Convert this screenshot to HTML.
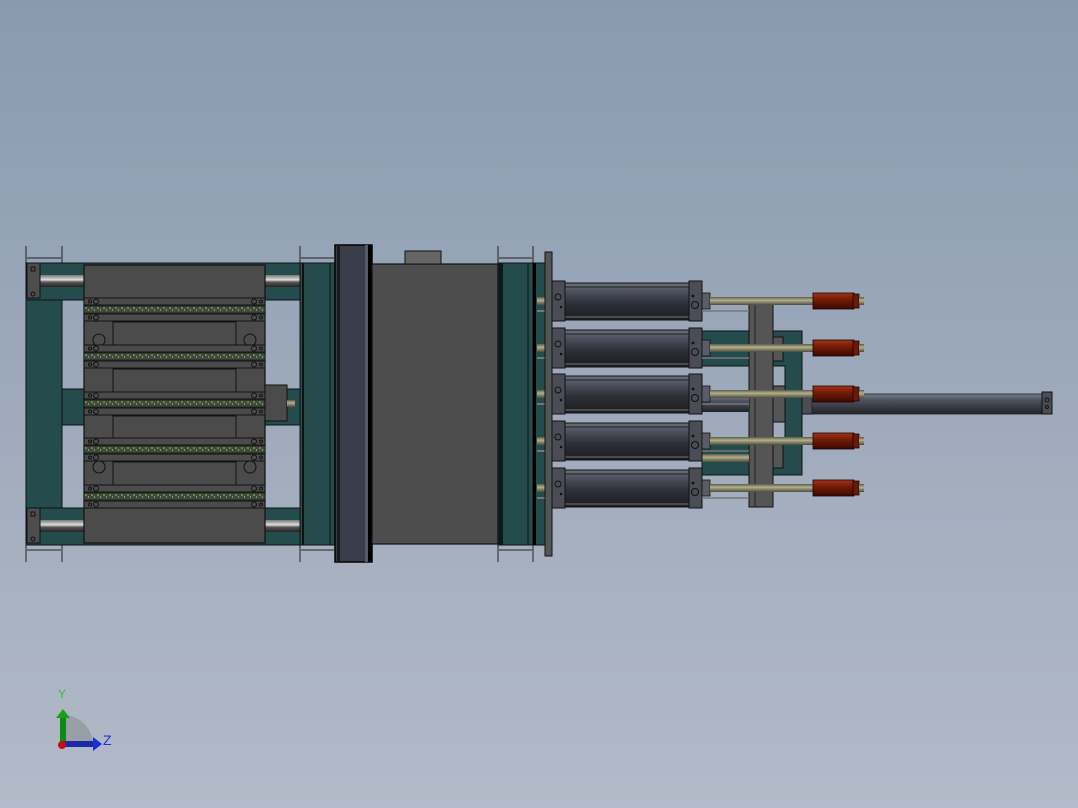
<!DOCTYPE html>
<html><head><meta charset="utf-8"><style>
html,body{margin:0;padding:0;width:1078px;height:808px;overflow:hidden}
body{background:linear-gradient(#899aaf,#b3bac9)}
svg{position:absolute;left:0;top:0}
</style></head><body>
<svg width="1078" height="808" viewBox="0 0 1078 808" xmlns="http://www.w3.org/2000/svg">
<defs>
<linearGradient id="rod" x1="0" y1="0" x2="0" y2="1"><stop offset="0" stop-color="#777"/><stop offset=".4" stop-color="#ddd"/><stop offset=".6" stop-color="#555"/><stop offset="1" stop-color="#222"/></linearGradient>
<linearGradient id="barrel" x1="0" y1="0" x2="0" y2="1"><stop offset="0" stop-color="#6a6e7c"/><stop offset=".25" stop-color="#4a4e5a"/><stop offset=".55" stop-color="#2e3038"/><stop offset="1" stop-color="#1c1d22"/></linearGradient>
<linearGradient id="olive" x1="0" y1="0" x2="0" y2="1"><stop offset="0" stop-color="#5b5a45"/><stop offset=".4" stop-color="#b2b08e"/><stop offset="1" stop-color="#4e4c3a"/></linearGradient>
<linearGradient id="red" x1="0" y1="0" x2="0" y2="1"><stop offset="0" stop-color="#a0361c"/><stop offset=".35" stop-color="#7a1e08"/><stop offset="1" stop-color="#3a0a02"/></linearGradient>
<linearGradient id="longrod" x1="0" y1="0" x2="0" y2="1"><stop offset="0" stop-color="#7a7e8c"/><stop offset=".3" stop-color="#4e525e"/><stop offset="1" stop-color="#22242a"/></linearGradient>
<pattern id="grass" width="6" height="7" patternUnits="userSpaceOnUse"><rect width="6" height="7" fill="#3f4a3a"/><rect x="1" y="2" width="2" height="2" fill="#5f8a48"/><rect x="4" y="4" width="1" height="2" fill="#7a9a60"/></pattern>
<g id="strip">
 <rect x="84" y="0" width="181" height="7" fill="#4b4b4b" stroke="#111" stroke-width="1"/>
 <rect x="84" y="8" width="181" height="7" fill="url(#grass)" stroke="#111" stroke-width=".6"/>
 <rect x="84" y="16" width="181" height="7" fill="#4b4b4b" stroke="#111" stroke-width="1"/>
 <circle cx="90" cy="3.5" r="1.5" fill="none" stroke="#111"/><circle cx="96" cy="3.5" r="2.5" fill="none" stroke="#111"/>
 <circle cx="254" cy="3.5" r="2.5" fill="none" stroke="#111"/><circle cx="261" cy="3.5" r="1.5" fill="none" stroke="#111"/>
 <circle cx="90" cy="19.5" r="1.5" fill="none" stroke="#111"/><circle cx="96" cy="19.5" r="2.5" fill="none" stroke="#111"/>
 <circle cx="254" cy="19.5" r="2.5" fill="none" stroke="#111"/><circle cx="261" cy="19.5" r="1.5" fill="none" stroke="#111"/>
</g>
<g id="cyl">
 <rect x="537" y="-4" width="8" height="8" fill="url(#olive)"/>
 <rect x="537" y="9" width="8" height="2" fill="#777"/>
 <rect x="565" y="-18" width="124" height="37" fill="url(#barrel)" stroke="#111" stroke-width="1"/>
 <line x1="565" y1="-14" x2="689" y2="-14" stroke="#222"/>
 <line x1="565" y1="16" x2="689" y2="16" stroke="#777"/>
 <rect x="552" y="-20" width="13" height="40" fill="#4a4c56" stroke="#111"/>
 <circle cx="558" cy="-4" r="3" fill="none" stroke="#111"/><circle cx="561" cy="6" r="1.3" fill="#111"/>
 <rect x="689" y="-20" width="13" height="40" fill="#4a4c56" stroke="#111"/>
 <circle cx="695" cy="4" r="3.5" fill="none" stroke="#111"/><circle cx="693" cy="-5" r="1.4" fill="#111"/>
 <rect x="702" y="-8" width="8" height="16" fill="#5a5c66" stroke="#111" stroke-width=".8"/>
 <rect x="710" y="-4" width="103" height="8" fill="url(#olive)"/>
 <line x1="702" y1="10" x2="749" y2="10" stroke="#777" stroke-width="1.5"/>
 <rect x="813" y="-8" width="41" height="16" fill="url(#red)" stroke="#1a0500" stroke-width=".8"/>
 <rect x="853" y="-7" width="6" height="14" fill="#6a1a08" stroke="#1a0500" stroke-width=".8"/>
 <rect x="859" y="-4" width="5" height="8" fill="url(#olive)"/>
</g>
</defs>

<!-- LEFT FRAME -->
<path d="M26 246v17M62 246v17M27 258h34M26 562v-17M62 562v-17M27 550h34" fill="none" stroke="#222"/>
<rect x="26" y="263" width="36" height="282" fill="#244c4c" stroke="#111"/>
<rect x="26" y="263" width="274" height="37" fill="#244c4c" stroke="#111"/>
<rect x="26" y="508" width="274" height="37" fill="#244c4c" stroke="#111"/>
<rect x="62" y="389" width="238" height="36" fill="#244c4c" stroke="#111"/>
<rect x="40" y="275" width="260" height="12" fill="url(#rod)"/>
<rect x="40" y="520" width="260" height="12" fill="url(#rod)"/>
<rect x="27" y="263" width="13" height="35" fill="#4d4d4d" stroke="#111"/>
<rect x="27" y="508" width="13" height="35" fill="#4d4d4d" stroke="#111"/>
<rect x="31" y="267" width="4" height="4" fill="none" stroke="#111"/><circle cx="33" cy="294" r="2" fill="none" stroke="#111"/>
<rect x="31" y="512" width="4" height="4" fill="none" stroke="#111"/><circle cx="33" cy="539" r="2" fill="none" stroke="#111"/>

<!-- MOLD STACK -->
<rect x="84" y="265" width="181" height="278" fill="#4b4b4b" stroke="#111" stroke-width="1.2"/>
<g stroke="#111" fill="none">
 <rect x="113" y="322" width="123" height="24"/><rect x="113" y="369" width="123" height="24"/>
 <rect x="113" y="416" width="123" height="23"/><rect x="113" y="462" width="123" height="24"/>
 <circle cx="99" cy="340" r="6"/><circle cx="250" cy="340" r="6"/>
 <circle cx="99" cy="467" r="6"/><circle cx="250" cy="467" r="6"/>
</g>
<use href="#strip" y="298"/><use href="#strip" y="345"/><use href="#strip" y="392"/><use href="#strip" y="438"/><use href="#strip" y="485"/>
<rect x="265" y="385" width="22" height="36" fill="#4b4b4b" stroke="#111"/>
<rect x="287" y="400" width="8" height="7" fill="url(#olive)"/>

<!-- MIDDLE -->
<path d="M300 246v17M335 246v17M301 258h33M300 562v-17M335 562v-17M301 550h33" fill="none" stroke="#222"/>
<rect x="300" y="263" width="35" height="282" fill="#244c4c" stroke="#111"/>
<line x1="303" y1="263" x2="303" y2="545" stroke="#111" stroke-width="2"/>
<line x1="330" y1="263" x2="330" y2="545" stroke="#111"/>
<rect x="335" y="245" width="37" height="317" fill="#3a3e4a" stroke="#000" stroke-width="1.5"/>
<rect x="337" y="245" width="3" height="317" fill="#1a1a20"/>
<rect x="365" y="245" width="3" height="317" fill="#55596a"/>
<rect x="368" y="245" width="4" height="317" fill="#000"/>
<rect x="372" y="264" width="126" height="280" fill="#4d4d4d" stroke="#111" stroke-width="1.2"/>
<rect x="405" y="251" width="36" height="13" fill="#666" stroke="#111"/>
<path d="M498 246v17M533 246v17M499 258h33M498 562v-17M533 562v-17M499 550h33" fill="none" stroke="#222"/>
<rect x="498" y="263" width="35" height="282" fill="#244c4c" stroke="#111"/>
<rect x="498" y="263" width="5" height="282" fill="#0e1a1a"/>
<line x1="528" y1="263" x2="528" y2="545" stroke="#111"/>
<rect x="533" y="263" width="12" height="282" fill="#244c4c" stroke="#111"/>
<rect x="533" y="263" width="3" height="282" fill="#000"/>

<!-- RIGHT BRACKET -->
<path d="M702 331h100v144h-100v-36h83v-73h-83z" fill="#244c4c" stroke="#111"/>
<rect x="749" y="304" width="24" height="203" fill="#555" stroke="#111"/>
<line x1="755" y1="304" x2="755" y2="507" stroke="#222"/>
<rect x="773" y="337" width="10" height="24" fill="#555" stroke="#111"/>
<rect x="773" y="444" width="10" height="24" fill="#555" stroke="#111"/>
<rect x="773" y="386" width="12" height="36" fill="#555" stroke="#111"/>
<rect x="702" y="396" width="47" height="16" fill="url(#longrod)"/>
<rect x="702" y="454" width="47" height="8" fill="url(#olive)"/>
<rect x="802" y="392" width="12" height="22" fill="#4a4c56" stroke="#111"/>
<rect x="812" y="394" width="230" height="20" fill="url(#longrod)" stroke="#222" stroke-width=".8"/>
<rect x="1042" y="392" width="10" height="22" fill="#4a4c56" stroke="#111"/>
<circle cx="1047" cy="400" r="2" fill="none" stroke="#111"/><circle cx="1047" cy="407" r="1.5" fill="none" stroke="#111"/>

<!-- CYLINDERS -->
<use href="#cyl" y="301"/><use href="#cyl" y="348"/><use href="#cyl" y="394"/><use href="#cyl" y="441"/><use href="#cyl" y="488"/>
<rect x="545" y="252" width="7" height="304" fill="#555" stroke="#111"/>

<!-- AXIS -->
<path d="M63 745V715A30 30 0 0 1 93 745Z" fill="#9a9ea6"/>
<rect x="60" y="716" width="6" height="30" fill="#0f8a10"/>
<path d="M56 718l7-9 7 9z" fill="#18a018"/>
<rect x="62" y="741" width="32" height="6" fill="#1a2aa8"/>
<path d="M93 737l9 7-9 7z" fill="#1a30d0"/>
<circle cx="62" cy="745" r="4" fill="#c01010"/>
<text x="58" y="698" font-family="Liberation Sans, sans-serif" font-size="12" fill="#20d020">Y</text>
<text x="103" y="745" font-family="Liberation Sans, sans-serif" font-size="14" fill="#2030e0">Z</text>
</svg>
</body></html>
